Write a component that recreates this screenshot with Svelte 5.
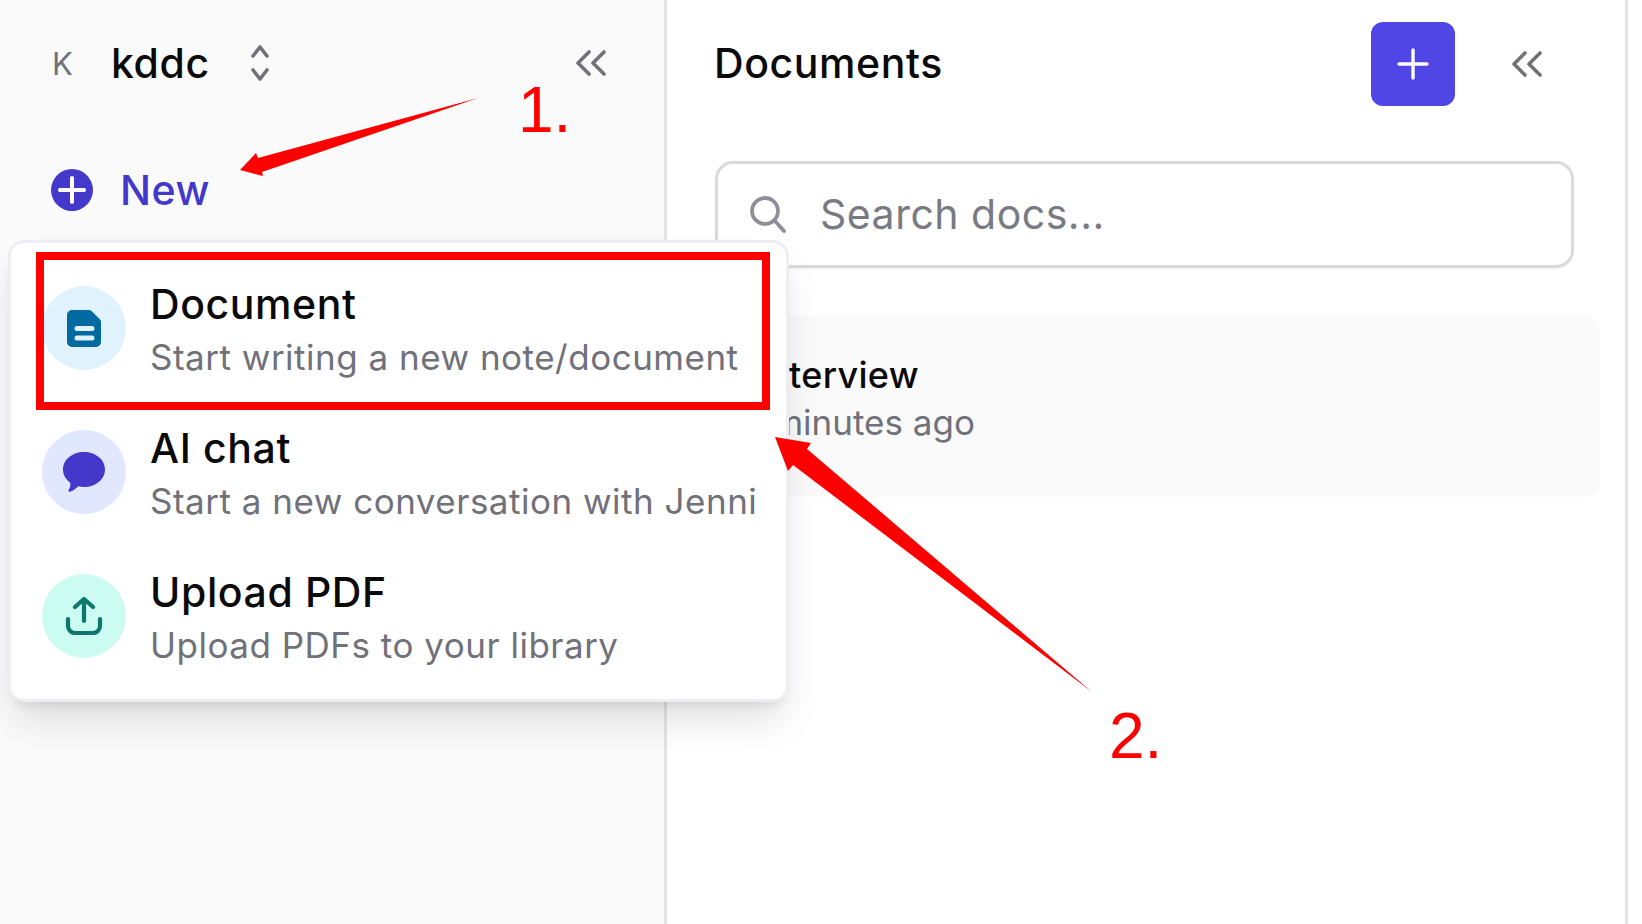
<script lang="ts">
  const items = [
    { key: "doc", title: "Document", sub: "Start writing a new note/document" },
    { key: "chat", title: "AI chat", sub: "Start a new conversation with Jenni" },
    { key: "upload", title: "Upload PDF", sub: "Upload PDFs to your library" },
  ];
</script>

<div class="page">
  <aside class="sidebar">
    <header class="side-head">
      <span class="avatar">K</span>
      <span class="workspace">kddc</span>
      <svg class="updown" width="18" height="36" viewBox="0 0 18 36" fill="none" stroke="#71717a" stroke-width="3.6" stroke-linecap="round" stroke-linejoin="round">
        <path d="M2 11 9 2l7 9M2 25l7 9 7-9" />
      </svg>
      <svg class="collapse" width="30" height="26" viewBox="0 0 30 26" fill="none" stroke="#71717a" stroke-width="3.6" stroke-linecap="round" stroke-linejoin="round">
        <path d="M13 2 2 13l11 11M28 2 17 13l11 11" />
      </svg>
    </header>
    <div class="new-row">
      <svg width="42" height="42" viewBox="0 0 42 42">
        <circle cx="21" cy="21" r="21" fill="#4338ca" />
        <path d="M21 9v24M9 21h24" stroke="#fff" stroke-width="4" stroke-linecap="round" />
      </svg>
      <span>New</span>
    </div>
  </aside>

  <main class="panel">
    <header class="panel-head">
      <h1>Documents</h1>
      <button type="button" class="add" aria-label="New document">
        <svg width="32" height="32" viewBox="0 0 32 32" fill="none" stroke="#fff" stroke-width="3.4" stroke-linecap="round">
          <path d="M16 2v28M2 16h28" />
        </svg>
      </button>
      <svg class="collapse" width="30" height="26" viewBox="0 0 30 26" fill="none" stroke="#71717a" stroke-width="3.6" stroke-linecap="round" stroke-linejoin="round">
        <path d="M13 2 2 13l11 11M28 2 17 13l11 11" />
      </svg>
    </header>
    <label class="search">
      <svg width="36" height="37" viewBox="0 0 36 37" fill="none" stroke="#8f8f97" stroke-width="3.8" stroke-linecap="round">
        <circle cx="15" cy="15" r="13" />
        <path d="m25 25 9 10" />
      </svg>
      <input type="text" placeholder="Search docs..." />
    </label>
    <div class="doc-card">
      <div class="doc-title">Interview</div>
      <div class="doc-time">4 minutes ago</div>
    </div>
  </main>

  <div class="menu">
    {#each items as item}
      <div class="item">
        <span class="bubble {item.key}">
          {#if item.key === "doc"}
            <svg width="34" height="37" viewBox="0 0 34 37">
              <path fill="#0369a1" fill-rule="evenodd" d="M5 0h17c1 0 2 .4 2.800 1.200l8 8c.8.800 1.200 1.800 1.200 2.800v20a5 5 0 0 1-5 5H5a5 5 0 0 1-5-5V5a5 5 0 0 1 5-5Zm5 16a2.500 2.500 0 0 0 0 5h15a2.500 2.500 0 0 0 0-5Zm0 9.500a2.500 2.500 0 0 0 0 5h15a2.500 2.500 0 0 0 0-5Z" />
            </svg>
          {:else if item.key === "chat"}
            <svg width="42" height="40" viewBox="0 0 42 40">
              <path fill="#4338ca" d="M21 0c11.600 0 21 7.600 21 17.500S32.600 35 21 35c-2 0-4-.2-5.800-.7C13 36.800 9.500 39.500 7 39.800c-1.500.2-2-1.200-1.200-2.300 1.200-1.700 1.800-3.900 1.500-6.800C2.800 27.500 0 22.800 0 17.500 0 7.600 9.400 0 21 0Z" />
            </svg>
          {:else}
            <svg width="38" height="38" viewBox="0 0 38 38" fill="none" stroke="#0f766e" stroke-width="4.200" stroke-linecap="round" stroke-linejoin="round">
              <path d="M19 24V3M10 10l9-8 9 8M3 22v7a7 7 0 0 0 7 7h18a7 7 0 0 0 7-7v-7" />
            </svg>
          {/if}
        </span>
        <div class="item-text">
          <div class="item-title">{item.title}</div>
          <div class="item-sub">{item.sub}</div>
        </div>
      </div>
    {/each}
  </div>

  <svg class="marks" width="1642" height="924" viewBox="0 0 1642 924">
    <rect x="40" y="256" width="726" height="150" fill="none" stroke="#f00" stroke-width="8" />
    <path fill="#f00" d="M478 98 262 172 263 176 240 170 256 153 258 158Z" />
    <path fill="#f00" d="M1092 692 793 465 788 471 775 437 811 443 807 449Z" />
  </svg>
  <span class="num one">1.</span>
  <span class="num two">2.</span>
</div>

<style>
  :global(body) {
    margin: 0;
    background: #fff;
    font-family: Inter, "Liberation Sans", sans-serif;
  }
  .page {
    position: relative;
    display: flex;
    width: 1642px;
    height: 924px;
    overflow: hidden;
    color: #0a0a0a;
  }
  .sidebar {
    box-sizing: border-box;
    width: 667px;
    background: #fafafa;
    border-right: 3px solid #e4e4e7;
  }
  .side-head {
    display: flex;
    align-items: center;
    height: 84px;
    margin-top: 21px;
    padding: 0 58px 0 52px;
  }
  .avatar {
    width: 59px;
    font-size: 31px;
    color: #71717a;
  }
  .workspace {
    font-size: 41px;
    font-weight: 500;
    letter-spacing: 0.6px;
    margin-right: 41px;
  }
  .side-head .collapse {
    margin-left: auto;
  }
  .new-row {
    display: flex;
    align-items: center;
    gap: 27px;
    margin: 64px 0 0 51px;
    font-size: 41px;
    line-height: 42px;
    font-weight: 500;
    letter-spacing: 0.6px;
    color: #4338ca;
  }
  .panel {
    box-sizing: border-box;
    width: 961px;
    padding: 22px 25px 0 47px;
    border-right: 3px solid #e4e4e7;
  }
  .panel-head {
    display: flex;
    align-items: center;
    margin-right: 58px;
    height: 84px;
  }
  h1 {
    margin: 0 auto 2px 0;
    font-size: 41px;
    font-weight: 500;
    letter-spacing: 0.6px;
  }
  .add {
    display: flex;
    align-items: center;
    justify-content: center;
    width: 84px;
    height: 84px;
    padding: 0;
    margin-right: 57px;
    border: 0;
    border-radius: 12px;
    background: #4f46e5;
  }
  .search {
    box-sizing: border-box;
    display: flex;
    align-items: center;
    gap: 34px;
    height: 107px;
    margin: 55px 26px 0 1px;
    padding-left: 32px;
    border: 3px solid #d9d9de;
    border-radius: 18px;
    box-shadow: 0 1px 3px rgba(0, 0, 0, 0.06);
  }
  .search input {
    flex: 1;
    min-width: 0;
    padding: 0 0 2px;
    border: 0;
    outline: 0;
    background: transparent;
    font: 400 41px Inter, "Liberation Sans", sans-serif;
    letter-spacing: 0.5px;
  }
  .search input::placeholder {
    color: #7a7a83;
    opacity: 1;
  }
  .doc-card {
    box-sizing: border-box;
    height: 181px;
    margin: 48px 0 0 1px;
    padding: 35px 0 0 25px;
    border-radius: 16px;
    background: #fafafa;
  }
  .doc-title {
    margin-left: 17px;
    font-size: 36px;
    font-weight: 500;
    letter-spacing: 0.3px;
    line-height: 48px;
  }
  .doc-time {
    font-size: 35px;
    line-height: 47px;
    color: #71717a;
  }
  .menu {
    position: absolute;
    left: 8px;
    top: 240px;
    box-sizing: border-box;
    display: flex;
    flex-direction: column;
    gap: 60px;
    width: 781px;
    height: 462px;
    padding: 43px 0 0 31px;
    background: #fff;
    border: 3px solid #eceef2;
    border-radius: 16px;
    box-shadow: 0 24px 40px -8px rgba(0, 0, 0, 0.13), 0 8px 12px -6px rgba(0, 0, 0, 0.1);
  }
  .item {
    display: flex;
    align-items: flex-start;
    gap: 24px;
    height: 84px;
  }
  .bubble {
    flex: none;
    display: flex;
    align-items: center;
    justify-content: center;
    width: 84px;
    height: 84px;
    border-radius: 50%;
  }
  .bubble.doc { background: #e0f2fe; }
  .bubble.chat { background: #e0e7ff; }
  .bubble.upload { background: #ccfbf1; }
  .item-title {
    font-size: 41px;
    font-weight: 500;
    letter-spacing: 0.6px;
    line-height: 36px;
  }
  .item-sub {
    margin-top: 13px;
    font-size: 35px;
    letter-spacing: 0.5px;
    line-height: 44px;
    color: #71717a;
    white-space: nowrap;
  }
  .marks {
    position: absolute;
    left: 0;
    top: 0;
    pointer-events: none;
  }
  .num {
    position: absolute;
    font-family: "Liberation Sans", Arial, sans-serif;
    font-size: 64px;
    line-height: 1;
    color: #f00;
  }
  .one { left: 518px; top: 78px; }
  .two { left: 1109px; top: 704px; }
</style>
